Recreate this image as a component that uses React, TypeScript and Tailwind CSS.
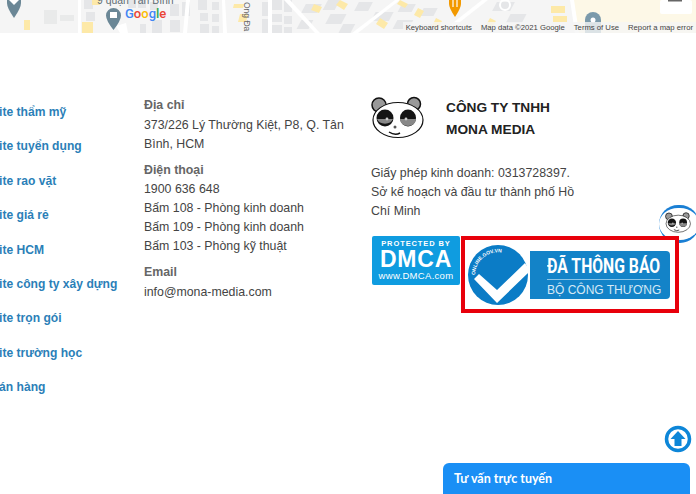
import React from "react";

const links = [
  "Website thẩm mỹ",
  "Website tuyển dụng",
  "Website rao vặt",
  "Website giá rẻ",
  "Website HCM",
  "Website công ty xây dựng",
  "Website trọn gói",
  "Website trường học",
];

const Panda: React.FC<{ className?: string }> = ({ className }) => (
  <svg viewBox="0 0 53 43" className={className}>
    <circle cx="8" cy="9" r="7" fill="#999" stroke="#111" strokeWidth="1.5" />
    <circle cx="43" cy="8" r="6.5" fill="#999" stroke="#111" strokeWidth="1.5" />
    <ellipse cx="27" cy="24" rx="25" ry="17.5" fill="#fff" stroke="#111" strokeWidth="1.2" />
    <ellipse cx="14" cy="22" rx="8.5" ry="8.5" fill="#141414" />
    <ellipse cx="37" cy="22" rx="8" ry="8.5" fill="#141414" />
    <path d="M6 23a8.5 7 0 0 0 16 0z" fill="#888" />
    <path d="M29 23a8 7 0 0 0 16 0z" fill="#888" />
    <circle cx="16" cy="23" r="1.4" fill="#ccc" />
    <circle cx="35" cy="23" r="1.4" fill="#ccc" />
    <circle cx="24" cy="31" r="1.5" fill="#555" />
    <path d="M18 36q6 4 11 1" fill="none" stroke="#111" strokeWidth="1.5" />
  </svg>
);

// rows of little houses, the way the map tiles draw them
const houseRows: [number, number, number, number][] = [
  [84, 0, 9, 9], [86, 12, 9, 9], [128, 0, 8, 8], [138, 0, 8, 8],
  [170, 4, 9, 12], [170, 20, 10, 12], [182, 2, 8, 14], [198, 0, 9, 10],
  [200, 13, 8, 8], [200, 24, 9, 9], [212, 2, 7, 8], [212, 14, 7, 8],
  [212, 26, 7, 7], [262, 2, 8, 14], [262, 19, 8, 14], [272, 0, 10, 10],
  [272, 14, 10, 8], [272, 25, 10, 8], [284, 0, 8, 12], [284, 16, 8, 8],
  [284, 27, 8, 6], [140, 24, 6, 9], [150, 2, 8, 8], [152, 20, 10, 13],
];

const diagonalRows: [number, number, number, number][] = [
  [300, 4, 16, 9], [320, 0, 12, 10], [304, 20, 12, 9], [330, 14, 16, 10],
  [352, 2, 14, 9], [348, 24, 12, 9], [374, 12, 18, 9], [396, 4, 14, 8],
  [400, 20, 16, 9], [420, 8, 14, 8], [426, 24, 12, 8], [490, 2, 18, 9],
  [510, 14, 16, 9],
];

const MapStrip: React.FC = () => (
  <svg viewBox="0 0 696 33" className="block h-[33px] w-full">
    <rect width="696" height="33" fill="#f5f5f5" />
    <path d="M572 0h124v33h-118z" fill="#fdf8e7" />
    <rect x="44" y="10" width="13" height="14" fill="#e9eaea" />
    <rect x="60" y="15" width="14" height="6" fill="#e9eaea" />
    <g fill="#e5e6e8">
      {houseRows.map(([x, y, w, h]) => (
        <rect key={`${x}-${y}`} x={x} y={y} width={w} height={h} />
      ))}
    </g>
    <g fill="#e5e6e8" transform="skewX(-28) translate(8 0)">
      {diagonalRows.map(([x, y, w, h]) => (
        <rect key={`${x}-${y}`} x={x} y={y} width={w} height={h} />
      ))}
    </g>
    <g fill="#fff">
      <path d="M78 0h3v33h-3z" />
      <path d="M116 26l10-3 2 10h-8z" />
      <path d="M186 0h4l-3 33h-4z" />
      <path d="M222 0h3l2 33h-4z" />
      <path d="M268 0h4v33h-4z" />
      <path d="M290 0l30 33h-5L284 0z" />
      <path d="M352 33L395 0h5L358 33z" />
      <path d="M440 33L482 0h6L446 33z" />
      <path d="M570 0h4l5 33h-4z" />
      <circle cx="505" cy="5" r="5" fill="none" stroke="#fff" strokeWidth="2" />
    </g>
    <g fill="#fde9a8">
      <rect x="24" y="20" width="6" height="10" />
      <rect x="82" y="22" width="11" height="11" />
      <rect x="92" y="0" width="8" height="5" />
      <path d="M234 4h10l-1 4h-10z" />
      <path d="M240 14h8l-2 8h-8z" />
      <path d="M314 4l8 3-3 6-8-3z" />
      <path d="M340 0l8 4-4 6-8-5z" />
      <path d="M380 18l8 5-4 6-8-5z" />
      <path d="M400 0l8 4-3 4-8-4z" />
      <path d="M418 8l6 3-4 7-6-3z" />
      <path d="M436 18l6 3-4 8-6-3z" />
      <path d="M490 18l6 3-6 9-5-3z" />
      <rect x="551" y="6" width="14" height="7" />
      <rect x="553" y="16" width="14" height="6" />
    </g>
    <path d="M7 0h14v3q0 5-7 15q-7-10-7-15z" fill="#6b8796" />
    <path d="M9 0h10l-5 5z" fill="#fff" />
    <path d="M106 15.500a7.500 7.500 0 0 1 15 0q0 5-7.500 14.500q-7.500-9.500-7.500-14.500z" fill="#6b8796" />
    <rect x="110" y="12" width="7" height="6" fill="#fff" />
    <path d="M449 0h12v4q0 4-6 13q-6-9-6-13z" fill="#f29900" />
    <path d="M453 0v7M457 0v7" stroke="#fff" strokeWidth="1.2" />
    <path d="M585 20a8 8 0 0 1 16 0v13h-16z" fill="#7b9aab" />
    <circle cx="593" cy="20" r="2.500" fill="#fff" />
    <rect x="660" y="0" width="32" height="14" rx="2" fill="#fff" />
    <rect x="668" y="0" width="14" height="1.500" fill="#666" />
    <rect x="403" y="22" width="293" height="11" fill="#f5f5f5" fillOpacity="0.8" />
  </svg>
);

export default function App() {
  return (
    <div className="relative h-[494px] w-[696px] overflow-hidden bg-white font-['Liberation_Sans',Arial,sans-serif]">
      <div className="relative h-[33px]">
        <MapStrip />
        <span className="absolute left-[97px] top-[-4px] whitespace-nowrap text-[10.4px] leading-[10px] text-[#5f6d74]">
          9 quận Tân Bình
        </span>
        <span className="absolute left-[125px] top-[7px] font-['Roboto',sans-serif] text-[13px] font-medium leading-[14px]">
          <span className="text-[#4285f4]">G</span>
          <span className="text-[#ea4335]">o</span>
          <span className="text-[#fbbc05]">o</span>
          <span className="text-[#4285f4]">g</span>
          <span className="text-[#34a853]">l</span>
          <span className="text-[#ea4335]">e</span>
        </span>
        <span className="absolute left-[232px] top-[12px] w-[29px] rotate-90 whitespace-nowrap text-[8.5px] leading-[9px] text-[#666]">
          Ong Đa
        </span>
        <div className="absolute bottom-0 right-[3px] flex gap-[9px] whitespace-nowrap text-[7.7px] leading-[11px] text-[#444]">
          <span>Keyboard shortcuts</span>
          <span>Map data ©2021 Google</span>
          <span>Terms of Use</span>
          <span>Report a map error</span>
        </div>
      </div>

      <div className="ml-[-33px] flex pt-[63px]">
        <ul className="w-[177px] shrink-0 pt-[8px] text-[12.1px] font-bold leading-[16px] text-[#2b7fb8]">
          {links.map((label) => (
            <li key={label} className="mb-[18.4px] whitespace-nowrap">
              {label}
            </li>
          ))}
          <li className="ml-[-4px] whitespace-nowrap">Web bán hàng</li>
        </ul>

        <div className="w-[227px] shrink-0 pr-[20px] text-[12.35px] leading-[19px] text-[#444]">
          <p className="font-bold text-[#666]">Địa chỉ</p>
          <p className="mt-[1px]">373/226 Lý Thường Kiệt, P8, Q. Tân Bình, HCM</p>
          <p className="mt-[7px] font-bold text-[#666]">Điện thoại</p>
          <p>1900 636 648</p>
          <p>Bấm 108 - Phòng kinh doanh</p>
          <p>Bấm 109 - Phòng kinh doanh</p>
          <p>Bấm 103 - Phòng kỹ thuật</p>
          <p className="mt-[7px] font-bold text-[#666]">Email</p>
          <p className="mt-[1px]">info@mona-media.com</p>
        </div>

        <div className="w-[325px] shrink-0">
          <div className="flex items-start">
            <Panda className="h-[43px] w-[53px]" />
            <p className="ml-[22px] pt-[1px] text-[13.7px] font-bold leading-[22px] text-[#222]">
              CÔNG TY TNHH
              <br />
              MONA MEDIA
            </p>
          </div>
          <p className="mt-[23px] w-[212px] text-[12.35px] leading-[19px] text-[#444]">
            Giấy phép kinh doanh: 0313728397. Sở kế hoạch và đầu tư thành phố Hồ Chí Minh
          </p>
          <div className="mt-[15px] flex items-start">
            <div className="ml-[1px] flex h-[49px] w-[88px] flex-col items-center rounded-[2px] bg-[#0f9ce0] text-white">
              <span className="mt-[3px] whitespace-nowrap text-[7.5px] font-bold leading-[9px] tracking-[0.9px]">PROTECTED BY</span>
              <span className="text-[23px] font-bold leading-[23px] tracking-[0.8px]">DMCA</span>
              <span className="whitespace-nowrap text-[9.5px] leading-[10px] tracking-[0.3px]">www.DMCA.com</span>
            </div>
            <div className="relative z-10 ml-[1px] flex h-[77px] w-[218px] items-center border-4 border-[#e8000b] bg-white pl-[3px]">
              <svg viewBox="0 0 60 60" className="h-[60px] w-[60px] shrink-0">
                <circle cx="30" cy="30" r="30" fill="#0b7cc6" />
                <path id="gov-arc" d="M7 30a23 23 0 0 1 41-14" fill="none" />
                <text fontSize="5" fontWeight="700" fill="#fff" fontFamily="Liberation Sans">
                  <textPath href="#gov-arc">ONLINE.GOV.VN</textPath>
                </text>
                <path d="M6 34l5-5 18 16 28-27 5 8-33 32z" fill="#fff" />
              </svg>
              <div className="ml-[2px] flex h-[48px] w-[140px] flex-col rounded-r-[4px] bg-[#1383c8] pl-[17px] text-white">
                <span className="mt-[5px] origin-left scale-x-[.787] whitespace-nowrap font-['Roboto',sans-serif] text-[20px] font-bold leading-[20px]">
                  ĐÃ THÔNG BÁO
                </span>
                <span className="mt-[3px] h-px w-[113px] bg-[#8cc4e6]" />
                <span className="mt-[3px] whitespace-nowrap text-[12px] leading-[15px] text-[#d5e9f6]">BỘ CÔNG THƯƠNG</span>
              </div>
            </div>
          </div>
        </div>
      </div>

      <div className="absolute left-[659px] top-[205px] h-[38px] w-[40px] rounded-full border-y-[3px] border-x-transparent border-y-[#1a7fd4]">
        <Panda className="ml-[5px] mt-[4px] h-[21px] w-[28px]" />
      </div>

      <svg viewBox="0 0 28 28" className="absolute left-[664px] top-[425px] h-[28px] w-[28px]">
        <circle cx="14" cy="14" r="11.500" fill="#fff" stroke="#0d86d8" strokeWidth="3.500" />
        <path d="M14 6l7.500 8H17.500v7h-7v-7H6.500z" fill="#0d86d8" />
      </svg>

      <div className="absolute left-[443px] top-[463px] h-[31px] w-[247px] rounded-t-[6px] bg-[#1a8ff5] pl-[11px] pt-[8px] font-['Lato',sans-serif] text-[12.5px] font-bold leading-[16px] text-white">
        Tư vấn trực tuyến
      </div>
    </div>
  );
}
